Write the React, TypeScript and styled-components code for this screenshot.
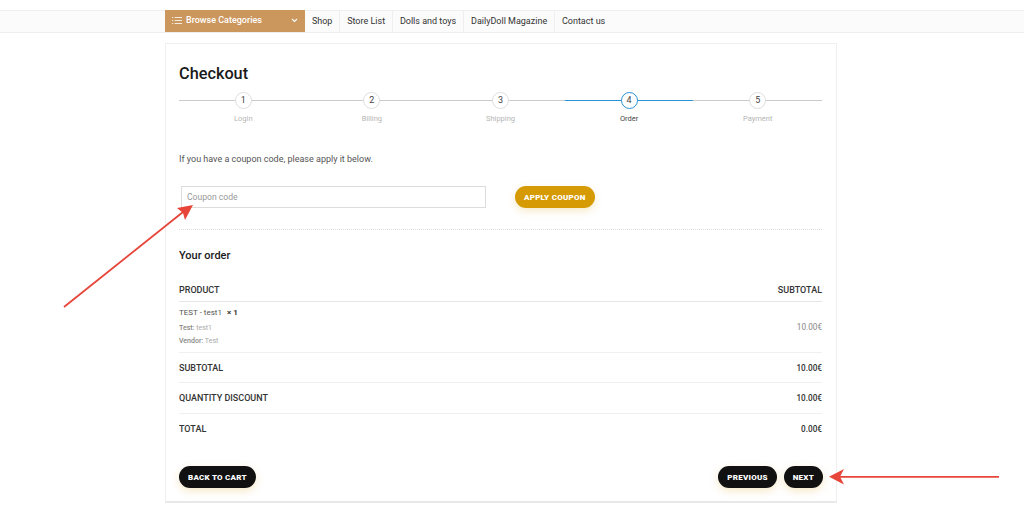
import React from "react";
import styled, { createGlobalStyle } from "styled-components";

const Global = createGlobalStyle`
  html, body { margin: 0; padding: 0; background: #fff; }
  body { font-family: Roboto, "Liberation Sans", sans-serif; color: #333; overflow: hidden; }
  * { box-sizing: border-box; }
`;

const Page = styled.div`
  position: relative;
  width: 1024px;
  height: 508px;
  padding-top: 10px;
  overflow: hidden;
`;
const NavBand = styled.nav`
  height: 23px;
  background: #fbfbfb;
  border-top: 1px solid #f0f0f0;
  border-bottom: 1px solid #efefef;
  padding-left: 165px;
  display: flex;
`;
const Browse = styled.div`
  width: 140px;
  margin-top: -1px;
  height: 22px;
  background: #cc975d;
  color: #fff;
  font-size: 9px;
  font-weight: 500;
  display: flex;
  align-items: center;
  padding: 0 7px 2px 7px;
  gap: 4px;
`;
const BrowseLabel = styled.span`
  flex: 1;
`;
const NavItem = styled.a`
  font-size: 9px;
  color: #333;
  display: flex;
  align-items: center;
  padding: 0 6.900px 2px;
  border-right: 1px solid #efefef;
  &:last-child { border-right: 0; }
`;
const Card = styled.main`
  margin: 10px 0 0 165px;
  width: 672px;
  height: 460px;
  background: #fff;
  border: 1px solid #efefef;
  border-bottom: 2px solid #e8e8e8;
  padding: 0 14px 0 13px;
`;
const Title = styled.h1`
  margin: 19px 0 0;
  font-size: 16.3px;
  line-height: 21px;
  font-weight: 500;
  color: #1a1a1a;
`;
const Steps = styled.div`
  display: grid;
  grid-template-columns: repeat(5, 1fr);
  margin-top: 8px;
`;
const Step = styled.div`
  position: relative;
  display: flex;
  flex-direction: column;
  align-items: center;
`;
const StepLine = styled.span<{ $active?: boolean }>`
  position: absolute;
  left: 0;
  right: 0;
  top: 7.5px;
  height: 1.5px;
  background: ${(p) => (p.$active ? "#2a93d5" : "#cbcbcb")};
`;
const Circle = styled.span<{ $active?: boolean }>`
  position: relative;
  width: 17px;
  height: 17px;
  border-radius: 50%;
  background: #fff;
  border: ${(p) => (p.$active ? "1.5px solid #2a93d5" : "1px solid #dedede")};
  font-size: 9px;
  line-height: 15px;
  text-align: center;
  color: #444;
`;
const StepLabel = styled.span<{ $active?: boolean }>`
  margin-top: 5px;
  font-size: 7.5px;
  line-height: 9px;
  color: ${(p) => (p.$active ? "#444" : "#b5b5b5")};
`;
const Intro = styled.p`
  margin: 30px 0 0;
  font-size: 9px;
  line-height: 12px;
  color: #555;
`;
const CouponRow = styled.div`
  display: flex;
  align-items: center;
  margin-top: 21px;
  padding-left: 2px;
`;
const CouponInput = styled.input`
  width: 305px;
  height: 22px;
  border: 1px solid #dcdcdc;
  padding: 0 5px;
  font-family: inherit;
  font-size: 8.6px;
  outline: none;
  &::placeholder { color: #999; opacity: 1; }
`;
const Pill = styled.button<{ $gold?: boolean }>`
  height: 22px;
  border: 0;
  border-radius: 11px;
  padding: 0 9px;
  background: ${(p) => (p.$gold ? "#d59a04" : "#111")};
  color: #fff;
  font-family: inherit;
  font-size: 8px;
  font-weight: 900;
  letter-spacing: 0.25px;
  box-shadow: 0 3px 9px rgba(213, 154, 4, 0.22);
`;
const ApplyButton = styled(Pill)`
  margin-left: 29px;
`;
const DottedRule = styled.hr`
  margin: 21px 0 0;
  border: 0;
  border-top: 1px dotted #dcdcdc;
`;
const SectionTitle = styled.h2`
  margin: 19px 0 0;
  font-size: 11px;
  line-height: 14px;
  font-weight: 500;
  color: #1a1a1a;
`;
const Row = styled.div<{ $h: number; $strong?: boolean }>`
  height: ${(p) => p.$h}px;
  display: flex;
  justify-content: space-between;
  align-items: center;
  border-bottom: 1px solid #f0f0f0;
  font-size: 9px;
  font-weight: ${(p) => (p.$strong ? 500 : 400)};
  color: #333;
`;
const HeadRow = styled(Row)`
  margin-top: 15px;
  border-bottom: 1px solid #e6e6e6;
`;
const LastRow = styled(Row)`
  border-bottom: 0;
`;
const Amount = styled.span`
  font-size: 8.2px;
`;
const ProductInfo = styled.div`
  display: flex;
  flex-direction: column;
  margin-top: 1px;
`;
const ProductName = styled.div`
  font-size: 8px;
  line-height: 11px;
  color: #555;
  margin-bottom: 4px;
`;
const Qty = styled.b`
  margin-left: 3px;
  font-weight: 700;
  color: #333;
`;
const Meta = styled.div`
  font-size: 7px;
  line-height: 13.5px;
  color: #aaa;
`;
const MetaKey = styled.span`
  font-weight: 500;
  color: #888;
`;
const Price = styled.span`
  font-size: 8.2px;
  color: #888;
`;
const Actions = styled.div`
  display: flex;
  justify-content: space-between;
  margin-top: 22px;
`;
const ActionGroup = styled.div`
  display: flex;
  gap: 7px;
  margin-right: -1px;
`;
const Overlay = styled.svg`
  position: absolute;
  inset: 0;
  pointer-events: none;
`;

const steps = ["Login", "Billing", "Shipping", "Order", "Payment"];

export default function App() {
  return (
    <Page>
      <Global />
      <NavBand>
        <Browse>
          <svg width="10" height="7" viewBox="0 0 10 7" fill="none" stroke="#fff" strokeWidth="0.8">
            <path d="M0 .5h1.2M0 3.500h1.2M0 6.500h1.200M2.600 .5h7.400M2.600 3.500h7.400M2.600 6.500h7.400" />
          </svg>
          <BrowseLabel>Browse Categories</BrowseLabel>
          <svg width="7" height="5" viewBox="0 0 7 5" fill="none" stroke="#fff" strokeWidth="1.1">
            <path d="M1 1l2.500 2.500L6 1" />
          </svg>
        </Browse>
        <NavItem>Shop</NavItem>
        <NavItem>Store List</NavItem>
        <NavItem>Dolls and toys</NavItem>
        <NavItem>DailyDoll Magazine</NavItem>
        <NavItem>Contact us</NavItem>
      </NavBand>
      <Card>
        <Title>Checkout</Title>
        <Steps>
          {steps.map((s, i) => (
            <Step key={s}>
              <StepLine $active={i === 3} />
              <Circle $active={i === 3}>{i + 1}</Circle>
              <StepLabel $active={i === 3}>{s}</StepLabel>
            </Step>
          ))}
        </Steps>
        <Intro>If you have a coupon code, please apply it below.</Intro>
        <CouponRow>
          <CouponInput placeholder="Coupon code" />
          <ApplyButton $gold>APPLY COUPON</ApplyButton>
        </CouponRow>
        <DottedRule />
        <SectionTitle>Your order</SectionTitle>
        <HeadRow $h={24} $strong>
          <span>PRODUCT</span>
          <span>SUBTOTAL</span>
        </HeadRow>
        <Row $h={51}>
          <ProductInfo>
            <ProductName>
              TEST - test1 <Qty>× 1</Qty>
            </ProductName>
            <Meta><MetaKey>Test:</MetaKey> test1</Meta>
            <Meta><MetaKey>Vendor:</MetaKey> Test</Meta>
          </ProductInfo>
          <Price>10.00€</Price>
        </Row>
        <Row $h={30} $strong>
          <span>SUBTOTAL</span>
          <Amount>10.00€</Amount>
        </Row>
        <Row $h={31} $strong>
          <span>QUANTITY DISCOUNT</span>
          <Amount>10.00€</Amount>
        </Row>
        <LastRow $h={30} $strong>
          <span>TOTAL</span>
          <Amount>0.00€</Amount>
        </LastRow>
        <Actions>
          <Pill>BACK TO CART</Pill>
          <ActionGroup>
            <Pill>PREVIOUS</Pill>
            <Pill>NEXT</Pill>
          </ActionGroup>
        </Actions>
      </Card>
      <Overlay width="1024" height="508" viewBox="0 0 1024 508">
        <path d="M64 307L183 212" stroke="#e8453a" strokeWidth="1.8" fill="none" />
        <path d="M193 205L177 208L183 213L185 220Z" fill="#e8453a" />
        <path d="M839 476.800H999" stroke="#e8453a" strokeWidth="1.8" fill="none" />
        <path d="M829 476.800L844 469L840 476.800L844 484.500Z" fill="#e8453a" />
      </Overlay>
    </Page>
  );
}
